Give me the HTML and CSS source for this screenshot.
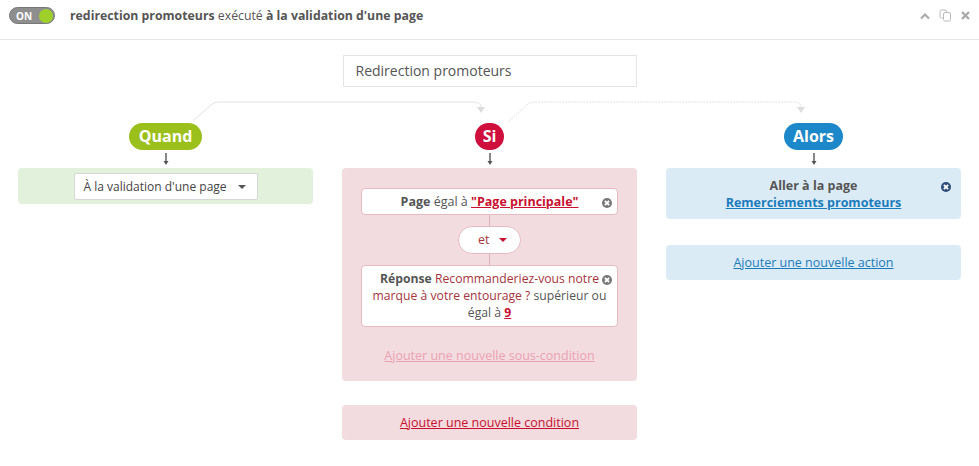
FILE: index.html
```html
<!DOCTYPE html>
<html>
<head>
    <title>Redirection promoteurs</title>
    <link rel="stylesheet" href="styles.css">
</head>
<body>
    <div class="header">
        <div class="toggle"><span class="toggle-label">ON</span><span class="toggle-knob"></span></div>
        <div class="title"><b>redirection promoteurs</b> exécuté <b>à la validation d'une page</b></div>
        <div class="tools">
            <svg width="12" height="10" viewBox="0 0 12 10"><path d="M2 7.5 L6 3.5 L10 7.5" fill="none" stroke="#aaa" stroke-width="2.2"/></svg>
            <svg width="13" height="13" viewBox="0 0 13 13"><rect x="1" y="1" width="6.5" height="8" rx="1.5" fill="none" stroke="#bbb"/><rect x="4.5" y="3.5" width="7" height="8.5" rx="1.5" fill="#fff" stroke="#bbb"/></svg>
            <svg width="11" height="11" viewBox="0 0 11 11"><path d="M2 2 L9 9 M9 2 L2 9" stroke="#aaa" stroke-width="2.4"/></svg>
        </div>
    </div>

    <div class="canvas">
        <svg class="links" width="979" height="90" viewBox="0 0 979 90">
            <path d="M193 81 L211 65 Q214 62 219 62 L473 62 Q481 62 481 67" fill="none" stroke="#e2e2e2"/>
            <path d="M477 67 L485 67 L481 73 Z" fill="#ddd"/>
            <path d="M509 81 L527 65 Q530 62 535 62 L793 62 Q801 62 801 67" fill="none" stroke="#e2e2e2" stroke-dasharray="2 1"/>
            <path d="M797 67 L805 67 L801 73 Z" fill="#ddd"/>
        </svg>

        <div class="name">Redirection promoteurs</div>

        <div class="columns">
            <div class="column">
                <div class="badge badge-when">Quand</div>
                <svg class="down" width="8" height="18" viewBox="0 0 8 18"><path d="M4 3 L4 12" stroke="#555" stroke-width="1.4"/><path d="M1.5 11 L6.5 11 L4 15 Z" fill="#555"/></svg>
                <div class="box box-when">
                    <div class="select">À la validation d'une page <span class="caret"></span></div>
                </div>
            </div>

            <div class="column">
                <div class="badge badge-if">Si</div>
                <svg class="down" width="8" height="18" viewBox="0 0 8 18"><path d="M4 3 L4 12" stroke="#555" stroke-width="1.4"/><path d="M1.5 11 L6.5 11 L4 15 Z" fill="#555"/></svg>
                <div class="box box-if">
                    <div class="card">
                        <b>Page</b> égal à <a class="link-red">"Page principale"</a>
                        <span class="remove"></span>
                    </div>
                    <div class="stem"></div>
                    <div class="operator">et <span class="caret caret-red"></span></div>
                    <div class="stem"></div>
                    <div class="card card-tall">
                        <b>Réponse</b> <span class="question">Recommanderiez-vous notre</span><br><span class="question">marque à votre entourage ?</span> supérieur ou<br>égal à <a class="link-red">9</a>
                        <span class="remove"></span>
                    </div>
                    <a class="sub-add">Ajouter une nouvelle sous-condition</a>
                </div>
                <div class="box box-if box-add">
                    <a class="link-add-red">Ajouter une nouvelle condition</a>
                </div>
            </div>

            <div class="column">
                <div class="badge badge-then">Alors</div>
                <svg class="down" width="8" height="18" viewBox="0 0 8 18"><path d="M4 3 L4 12" stroke="#555" stroke-width="1.4"/><path d="M1.5 11 L6.5 11 L4 15 Z" fill="#555"/></svg>
                <div class="box box-then">
                    <div class="action-title">Aller à la page</div>
                    <a class="link-blue">Remerciements promoteurs</a>
                    <span class="remove remove-blue"></span>
                </div>
                <div class="box box-then box-add box-add-then">
                    <a class="link-add-blue">Ajouter une nouvelle action</a>
                </div>
            </div>
        </div>
    </div>
</body>
</html>
```

FILE: styles.css
```css
body {
    margin: 0;
    font-family: "Open Sans", sans-serif;
    color: #555;
    background-color: #fff;
    width: 979px;
    height: 466px;
    overflow: hidden;
}
.header {
    height: 40px;
    border-bottom: 1px solid #e6e6e6;
    display: flex;
    align-items: center;
    padding-left: 9px;
    padding-right: 8px;
    box-sizing: border-box;
}
.toggle {
    width: 46px;
    height: 17px;
    border-radius: 9px;
    background-color: #8e8e8e;
    border: 1px solid #777;
    box-sizing: border-box;
    display: flex;
    align-items: center;
    justify-content: space-between;
    padding: 0 1px 0 6px;
    margin-top: -8px;
}
.toggle-label {
    color: #fff;
    font-size: 10px;
    font-weight: 700;
    line-height: 1;
}
.toggle-knob {
    width: 14px;
    height: 14px;
    border-radius: 50%;
    background-color: #9fd02a;
}
.title {
    margin-left: 15px;
    font-size: 12.3px;
    margin-top: -8px;
    flex: 1;
}
.title b {
    font-weight: 700;
}
.tools {
    display: flex;
    align-items: center;
    gap: 8px;
    margin-top: -8px;
}
.canvas {
    position: relative;
    padding-top: 15px;
}
.links {
    position: absolute;
    left: 0;
    top: 0;
}
.name {
    position: relative;
    width: 294px;
    height: 32px;
    margin: 0 auto;
    border: 1px solid #e4e4e4;
    box-sizing: border-box;
    font-size: 14px;
    line-height: 30px;
    padding-left: 12px;
    color: #555;
    background-color: #fff;
}
.columns {
    position: relative;
    display: grid;
    grid-template-columns: 295px 295px 295px;
    column-gap: 29px;
    padding-left: 18px;
    margin-top: 36px;
    align-items: start;
}
.column {
    display: flex;
    flex-direction: column;
    align-items: center;
}
.badge {
    height: 27px;
    line-height: 26px;
    border-radius: 14px;
    color: #fff;
    font-weight: 700;
    font-size: 16px;
    padding: 0 10px;
}
.badge-when {
    background-color: #9bc01b;
}
.badge-if {
    background-color: #cf0f3c;
    padding: 0 8px;
}
.badge-then {
    background-color: #1c87c9;
    padding: 0 9px;
}
.down {
    display: block;
}
.box {
    width: 100%;
    border-radius: 4px;
    box-sizing: border-box;
    font-size: 12.5px;
}
.box-when {
    background-color: #e1f1dc;
    padding: 5px 0 4px;
    display: flex;
    justify-content: center;
}
.select {
    width: 184px;
    height: 27px;
    box-sizing: border-box;
    background-color: #fff;
    border: 1px solid #d6d6d6;
    border-radius: 2px;
    font-size: 12px;
    line-height: 25px;
    padding-left: 9px;
    color: #444;
    position: relative;
}
.caret {
    position: absolute;
    right: 11px;
    top: 11px;
    width: 0;
    height: 0;
    border-left: 4px solid transparent;
    border-right: 4px solid transparent;
    border-top: 4px solid #555;
}
.box-if {
    background-color: #f2dcdf;
    padding: 20px 19px 17px;
    display: flex;
    flex-direction: column;
    align-items: center;
}
.card {
    position: relative;
    width: 100%;
    box-sizing: border-box;
    background-color: #fff;
    border: 1px solid #e6bac2;
    border-radius: 4px;
    text-align: center;
    padding: 4px 18px;
    line-height: 17px;
}
.card b {
    color: #555;
}
.card-tall {
    padding: 4px 6px 5px;
    white-space: nowrap;
    font-size: 12.2px;
}
.question {
    color: #a5343c;
}
.link-red {
    color: #c8102e;
    font-weight: 700;
    text-decoration: underline;
}
.remove {
    position: absolute;
    right: 5px;
    top: 9px;
    width: 10px;
    height: 10px;
    border-radius: 50%;
    background-color: #777;
}
.remove::before,
.remove::after {
    content: "";
    position: absolute;
    left: 2px;
    top: 4px;
    width: 6px;
    height: 2px;
    background-color: #fff;
    transform: rotate(45deg);
}
.remove::after {
    transform: rotate(-45deg);
}
.remove-blue {
    background-color: #2b4b7a;
    right: 10px;
    top: 14px;
}
.stem {
    width: 1px;
    height: 11px;
    background-color: #e2b0ba;
}
.operator {
    position: relative;
    width: 63px;
    height: 28px;
    box-sizing: border-box;
    background-color: #fff;
    border: 1px solid #e6bac2;
    border-radius: 14px;
    line-height: 26px;
    padding-left: 19px;
    color: #a5343c;
}
.caret-red {
    border-top-color: #c8102e;
    right: 13px;
    top: 11px;
}
.sub-add {
    margin-top: 20px;
    color: #eba1b3;
    text-decoration: underline;
    line-height: 17px;
}
.box-add {
    margin-top: 24px;
    padding: 9px 0;
    text-align: center;
    line-height: 17px;
}
.link-add-red {
    color: #c8102e;
    text-decoration: underline;
}
.box-then {
    position: relative;
    background-color: #dbebf5;
    text-align: center;
    padding: 9px 0 8px;
    line-height: 17px;
    display: flex;
    flex-direction: column;
    align-items: center;
}
.action-title {
    font-weight: 700;
    color: #555;
}
.link-blue {
    color: #1a7bbd;
    font-weight: 700;
    text-decoration: underline;
}
.box-add-then {
    margin-top: 26px;
    padding: 9px 0;
}
.link-add-blue {
    color: #1a7bbd;
    text-decoration: underline;
}
```
